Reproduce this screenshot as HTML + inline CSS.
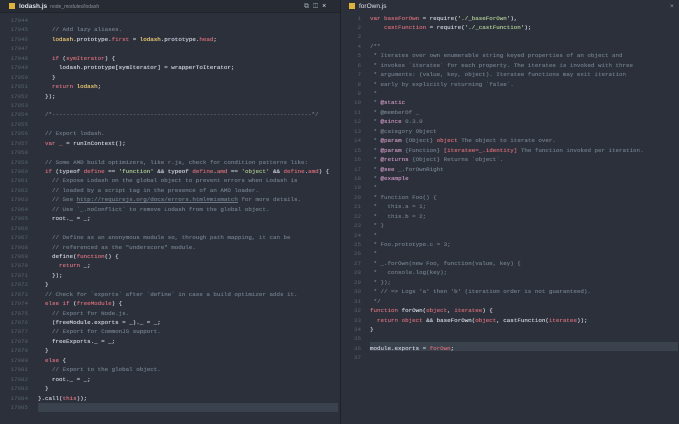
<!DOCTYPE html>
<html><head><meta charset="utf-8"><style>
*{margin:0;padding:0;box-sizing:border-box}
body{width:679px;height:424px;background:#2b303b;overflow:hidden;font-family:"Liberation Mono",monospace;position:relative}
.hdr{position:absolute;top:0;height:13px;background:#262b34;border-bottom:1px solid #1f232a}
.tab{position:absolute;top:0;height:13px;font-family:"Liberation Sans",sans-serif;font-size:6.5px;color:#dfe1e8;line-height:13px}
.ico{display:inline-block;width:6px;height:6px;background:#e2b33c;vertical-align:-1px;margin-right:4px}
.sub{color:#8a919c;font-size:5px;margin-left:3px}
.code{position:absolute;font-size:5.85px;line-height:9.43px;color:#c8cdd6;white-space:pre;text-shadow:0 0 0.4px currentColor}
.num{position:absolute;font-size:5.85px;line-height:9.43px;color:#56616c;white-space:pre;text-align:right}
.c{color:#6f7a86}.k{color:#d0707c}.v{color:#cc6a74}.o{color:#ebc873}.s{color:#a9c48f}.a{color:#c391b8}.u{text-decoration:underline}
.hl{position:absolute;height:9.4px;background:#3a424e}
</style></head><body>
<div class="hdr" style="left:0;width:340px"></div>
<div class="hdr" style="left:341px;width:338px;background:#2b303b;border-bottom:none"></div>
<div style="position:absolute;left:340px;top:0;width:1px;height:424px;background:#1d2128"></div>
<div class="tab" style="left:9px"><span class="ico"></span><b>lodash.js</b><span class="sub">node_modules/lodash</span></div>
<div class="tab" style="left:304px;color:#9aa3b0;font-size:7px">⧉&nbsp;&nbsp;◫&nbsp;&nbsp;<span style="color:#dfe1e8">×</span></div>
<div class="tab" style="left:349px"><span class="ico"></span>forOwn.js</div>
<div class="tab" style="left:670px;color:#9aa3b0">×</div>

<div class="hl" style="left:38px;top:403px;width:300px"></div>
<div class="hl" style="left:370px;top:342px;width:308px"></div>

<div class="num" style="left:6px;top:16px;width:22px">17044
17045
17046
17047
17048
17049
17050
17051
17052
17053
17054
17055
17056
17057
17058
17059
17060
17061
17062
17063
17064
17065
17066
17067
17068
17069
17070
17071
17072
17073
17074
17075
17076
17077
17078
17079
17080
17081
17082
17083
17084
17085</div>
<div class="code" style="left:38px;top:16px">
    <span class="c">// Add lazy aliases.</span>
    <span class="o">lodash</span>.prototype.<span class="v">first</span> = <span class="o">lodash</span>.prototype.<span class="v">head</span>;

    <span class="k">if</span> (<span class="v">symIterator</span>) {
      lodash.prototype[symIterator] = wrapperToIterator;
    }
    <span class="k">return</span> <span class="o">lodash</span>;
  });

  <span class="c">/*--------------------------------------------------------------------------*/</span>

  <span class="c">// Export lodash.</span>
  <span class="k">var</span> <span class="v">_</span> = runInContext();

  <span class="c">// Some AMD build optimizers, like r.js, check for condition patterns like:</span>
  <span class="k">if</span> (typeof <span class="v">define</span> == <span class="s">'function'</span> &amp;&amp; typeof <span class="v">define</span>.<span class="v">amd</span> == <span class="s">'object'</span> &amp;&amp; <span class="v">define</span>.<span class="v">amd</span>) {
    <span class="c">// Expose Lodash on the global object to prevent errors when Lodash is</span>
    <span class="c">// loaded by a script tag in the presence of an AMD loader.</span>
    <span class="c">// See <span class="u">http://requirejs.org/docs/errors.html#mismatch</span> for more details.</span>
    <span class="c">// Use `_.noConflict` to remove Lodash from the global object.</span>
    root._ = _;

    <span class="c">// Define as an anonymous module so, through path mapping, it can be</span>
    <span class="c">// referenced as the "underscore" module.</span>
    define(<span class="k">function</span>() {
      <span class="k">return</span> _;
    });
  }
  <span class="c">// Check for `exports` after `define` in case a build optimizer adds it.</span>
  <span class="k">else if</span> (<span class="v">freeModule</span>) {
    <span class="c">// Export for Node.js.</span>
    (freeModule.exports = _)._ = _;
    <span class="c">// Export for CommonJS support.</span>
    freeExports._ = _;
  }
  <span class="k">else</span> {
    <span class="c">// Export to the global object.</span>
    root._ = _;
  }
}.call(<span class="k">this</span>));
</div>

<div class="num" style="left:345px;top:13.5px;width:16px">1
2
3
4
5
6
7
8
9
10
11
12
13
14
15
16
17
18
19
20
21
22
23
24
25
26
27
28
29
30
31
32
33
34
35
36
37</div>
<div class="code" style="left:370px;top:13.5px"><span class="k">var</span> <span class="v">baseForOwn</span> = require(<span class="s">'./_baseForOwn'</span>),
    <span class="v">castFunction</span> = require(<span class="s">'./_castFunction'</span>);

<span class="c">/**
 * Iterates over own enumerable string keyed properties of an object and
 * invokes `iteratee` for each property. The iteratee is invoked with three
 * arguments: (value, key, object). Iteratee functions may exit iteration
 * early by explicitly returning `false`.
 *
 * <span class="a">@static</span>
 * @memberOf _
 * <span class="a">@since</span> 0.3.0
 * @category Object
 * <span class="a">@param</span> {Object} <span class="v">object</span> The object to iterate over.
 * <span class="a">@param</span> {Function} <span class="v">[iteratee=_.identity]</span> The function invoked per iteration.
 * <span class="a">@returns</span> {Object} Returns `object`.
 * <span class="a">@see</span> _.forOwnRight
 * <span class="a">@example</span>
 *
 * function Foo() {
 *   this.a = 1;
 *   this.b = 2;
 * }
 *
 * Foo.prototype.c = 3;
 *
 * _.forOwn(new Foo, function(value, key) {
 *   console.log(key);
 * });
 * // =&gt; Logs 'a' then 'b' (iteration order is not guaranteed).
 */</span>
<span class="k">function</span> forOwn(<span class="v">object</span>, <span class="v">iteratee</span>) {
  <span class="k">return</span> <span class="v">object</span> &amp;&amp; baseForOwn(<span class="v">object</span>, castFunction(<span class="v">iteratee</span>));
}

module.exports = <span class="v">forOwn</span>;
</div>
</body></html>
